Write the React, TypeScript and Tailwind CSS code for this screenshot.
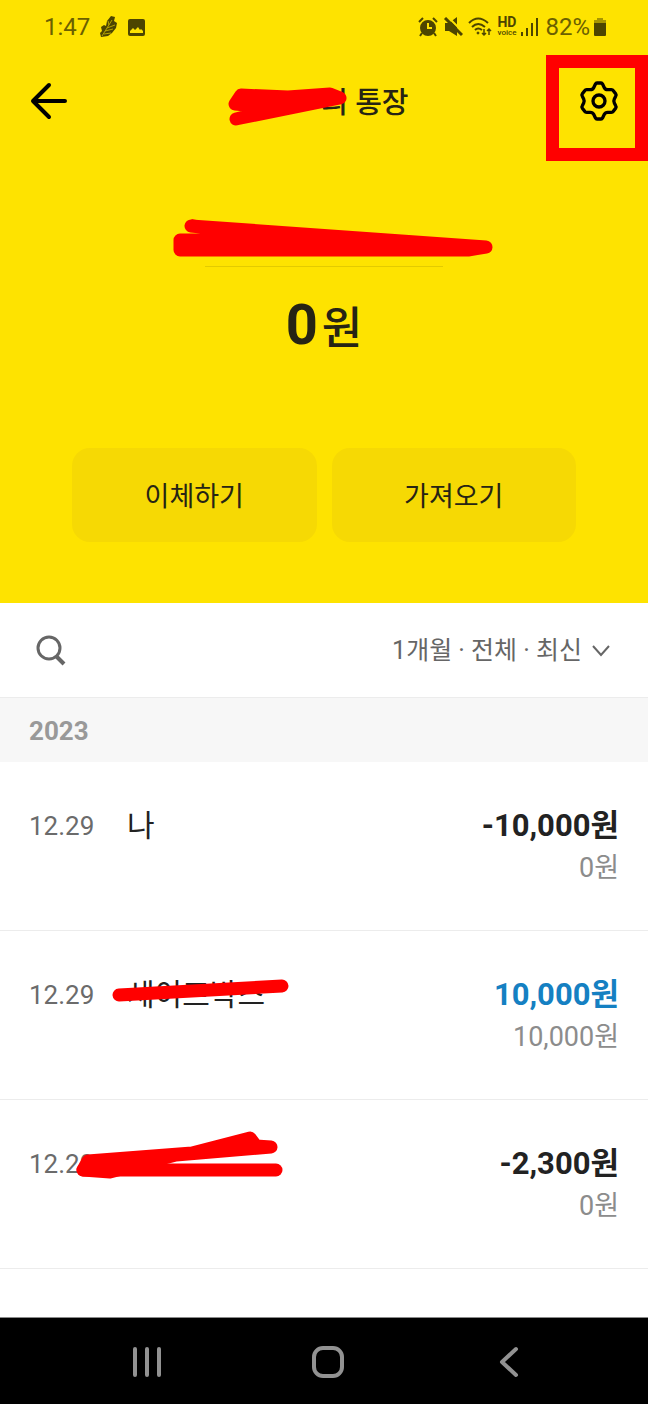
import { ReactNode } from "react";

type Transaction = {
  id: string;
  date: string;
  name: string;
  amount: string;
  balance: string;
  deposit?: boolean;
  mark?: ReactNode;
};

const transactions: Transaction[] = [
  {
    id: "tx1",
    date: "12.29",
    name: "나",
    amount: "-10,000원",
    balance: "0원",
  },
  {
    id: "tx2",
    date: "12.29",
    name: "세이프박스",
    amount: "10,000원",
    balance: "10,000원",
    deposit: true,
    mark: (
      <Marker width={300} height={100} className="left-0 top-0">
        <path d="M119 64L282 55" />
      </Marker>
    ),
  },
  {
    id: "tx3",
    date: "12.29",
    name: "",
    amount: "-2,300원",
    balance: "0원",
    mark: (
      <Marker width={300} height={100} className="left-0 top-0">
        <path d="M88 61L192 53L250 38L256 46L271 47L176 55L110 72L83 70Z" />
        <path d="M83 70H276" />
      </Marker>
    ),
  },
];

// thick red pen drawn on top of private details
function Marker({
  width,
  height,
  className,
  children,
}: {
  width: number;
  height: number;
  className: string;
  children: ReactNode;
}) {
  return (
    <svg
      width={width}
      height={height}
      viewBox={`0 0 ${width} ${height}`}
      className={`pointer-events-none absolute max-w-none fill-[#ff0000] stroke-[#ff0000] ${className}`}
      strokeWidth="13"
      strokeLinecap="round"
      strokeLinejoin="round"
      aria-hidden="true"
    >
      {children}
    </svg>
  );
}

function StatusBar() {
  return (
    <div className="flex h-[54px] items-center justify-between pl-11 pr-[42px] text-2xl text-[#6b6000]">
      <div className="flex items-center gap-[10px]">
        <span>1:47</span>
        <svg width="18" height="22" viewBox="0 0 18 22" fill="#4d4500">
          <path d="M11 0L15 1L14 5L17 7L16 12L12 17L8 20L1 21L0 17L2 15L1 11L4 9L6 10L7 5Z" />
          <path
            d="M2 20L12 4M5 15L13 13M7 12L15 9M4 18L11 17M9 9L8 5"
            stroke="#b5a300"
            strokeWidth="1"
          />
        </svg>
        <svg width="17" height="17" viewBox="0 0 17 17">
          <rect width="17" height="17" rx="2" fill="#4d4500" />
          <path d="M2 14V12L5 9L7 11L10 8L12 11L13 10L15 12V14Z" fill="#fee300" />
        </svg>
      </div>
      <div className="flex items-center gap-[5px]">
        <svg width="20" height="20" viewBox="0 0 20 20" fill="none" stroke="#4d4500">
          <circle cx="10" cy="11" r="7" fill="#4d4500" strokeWidth="2" />
          <path d="M1 5L5 1M19 5L15 1M4 16L2 19M16 16L18 19" strokeWidth="2" />
          <path d="M10 6V11H14" stroke="#fee300" strokeWidth="2" />
        </svg>
        <svg width="20" height="20" viewBox="0 0 20 20" fill="#4d4500">
          <path d="M2 6H6L14 0V19L6 14H2Z" />
          <path d="M5 0L20 15" stroke="#fee300" strokeWidth="2" />
          <path d="M2 1L19 18" stroke="#4d4500" strokeWidth="3" />
        </svg>
        <svg width="24" height="20" viewBox="0 0 24 20" fill="none" stroke="#4d4500">
          <path d="M1 6Q10 -3 20 6M4 10Q10 4 17 10M7 13Q10 10 14 13" strokeWidth="2" />
          <circle cx="10" cy="16" r="1" fill="#4d4500" />
          <path d="M16 12V18M14 16L16 18L18 16M21 18V12M19 14L21 12L23 14" strokeWidth="1.5" />
        </svg>
        <div className="flex flex-col items-center text-[#4d4500]">
          <span className="text-sm font-bold leading-3">HD</span>
          <span className="text-[8px] font-medium leading-[10px]">voice</span>
        </div>
        <svg width="17" height="18" viewBox="0 0 17 18" stroke="#4d4500" strokeWidth="2">
          <path d="M1 14V18M6 10V18" />
          <path d="M11 5V18M16 0V18" />
        </svg>
        <div className="flex items-center gap-1 pl-[2px]">
          <span>82%</span>
          <svg width="12" height="18" viewBox="0 0 12 18">
            <path d="M3 0H9V2H12V6H0V2H3Z" fill="#a89600" />
            <path d="M0 5H12V17Q12 18 11 18H1Q0 18 0 17Z" fill="#4d4500" />
          </svg>
        </div>
      </div>
    </div>
  );
}

function GearIcon() {
  return (
    <svg width="40" height="40" viewBox="0 0 120 120" fill="none" stroke="black" strokeWidth="10">
      <path d="M54 6H66Q69 6 71 10L76 20Q79 26 86 26H97Q101 26 103 29L110 38Q113 42 110 46L106 54Q103 60 106 66L110 74Q113 78 110 82L103 91Q101 94 97 94H86Q79 94 76 100L71 110Q69 114 66 114H54Q51 114 49 110L44 100Q41 94 34 94H23Q19 94 17 91L10 82Q7 78 10 74L14 66Q17 60 14 54L10 46Q7 42 10 38L17 29Q19 26 23 26H34Q41 26 44 20L49 10Q51 6 54 6Z" />
      <circle cx="60" cy="60" r="18" />
    </svg>
  );
}

function AccountHeader() {
  return (
    <header className="bg-[#fee300] text-[#262414]">
      <StatusBar />
      <div className="flex h-[94px] items-center justify-between pl-7 pr-[25px]">
        <button type="button" aria-label="뒤로" className="flex w-12">
          <svg
            width="40"
            height="40"
            viewBox="0 0 40 40"
            fill="none"
            stroke="black"
            strokeWidth="4"
            strokeLinecap="round"
            strokeLinejoin="round"
          >
            <path d="M21 4L5 20L21 36M5 20H37" />
          </svg>
        </button>
        <h1 className="relative w-[166px] pt-[6px] text-right text-[29px] font-medium">
          의 통장
          <Marker width={128} height={56} className="-left-[15px] top-0">
            <path d="M13 19L60 21L102 18L112 22L8 43L52 32L7 28Z" />
          </Marker>
        </h1>
        <button type="button" aria-label="설정" className="relative flex w-12 justify-center">
          <GearIcon />
          <span className="absolute -right-[25px] -top-[26px] h-[106px] w-[102px] border-[13px] border-[#ff0000]" />
        </button>
      </div>

      <div className="flex flex-col items-center pt-[71px]">
        <div className="relative h-12 w-[238px] border-b border-[#e3cb00]">
          <Marker width={322} height={40} className="-left-8 top-0">
            <path d="M18 7L313 28L295 31H7V21H157Z" />
          </Marker>
        </div>
        <p className="mt-[18px] text-[56px] font-bold leading-[80px]">
          0<span className="pl-1 text-[44px] font-medium">원</span>
        </p>
      </div>

      <div className="grid grid-cols-2 gap-[15px] px-[72px] pb-[61px] pt-[79px]">
        <button type="button" className="h-[94px] rounded-[18px] bg-[#f6d904] pt-1 text-[27px]">
          이체하기
        </button>
        <button type="button" className="h-[94px] rounded-[18px] bg-[#f6d904] pt-1 text-[27px]">
          가져오기
        </button>
      </div>
    </header>
  );
}

function TransactionItem({ item }: { item: Transaction }) {
  return (
    <li className="relative flex h-[169px] border-b border-[#ececec] px-[29px] pt-[43px] leading-[42px]">
      <span className="w-[98px] text-[26px] text-[#6b6b6b]">{item.date}</span>
      <span className="flex-1 text-[30px] text-[#222222]">{item.name}</span>
      <div className="text-right">
        <p
          className={
            item.deposit
              ? "text-[31px] font-bold text-[#1580c2]"
              : "text-[31px] font-bold text-[#222222]"
          }
        >
          {item.amount}
        </p>
        <p className="text-[27px] text-[#8c8c8c]">{item.balance}</p>
      </div>
      {item.mark}
    </li>
  );
}

function NavigationBar() {
  return (
    <nav className="grid h-[87px] grid-cols-3 place-items-center border-t border-[#8a8a8a] bg-black pl-14 pr-[49px] pt-[2px]">
      <button type="button" aria-label="최근 앱">
        <svg width="30" height="32" viewBox="0 0 30 32" stroke="#929292" strokeWidth="4" strokeLinecap="round">
          <path d="M3 3V29M15 3V29M27 3V29" />
        </svg>
      </button>
      <button type="button" aria-label="홈">
        <svg width="32" height="32" viewBox="0 0 32 32" fill="none" stroke="#929292" strokeWidth="4">
          <rect x="2" y="2" width="28" height="28" rx="9" />
        </svg>
      </button>
      <button type="button" aria-label="이전">
        <svg
          width="20"
          height="32"
          viewBox="0 0 20 32"
          fill="none"
          stroke="#929292"
          strokeWidth="4"
          strokeLinecap="round"
          strokeLinejoin="round"
        >
          <path d="M17 3L3 16L17 29" />
        </svg>
      </button>
    </nav>
  );
}

export default function App() {
  return (
    <div className="flex min-h-screen flex-col overflow-x-hidden bg-white font-[Roboto,'Noto_Sans_CJK_KR',sans-serif]">
      <AccountHeader />
      <main className="flex-1">
        <div className="flex h-[94px] items-center justify-between pl-9 pr-[38px] text-[#666666]">
          <button type="button" aria-label="검색">
            <svg width="30" height="32" viewBox="0 0 30 32" fill="none" stroke="#666666" strokeWidth="3">
              <circle cx="13" cy="14" r="11" />
              <path d="M20 22L28 30" strokeWidth="4" />
            </svg>
          </button>
          <button type="button" className="flex items-center gap-[10px] pt-[2px] text-[25px]">
            1개월 · 전체 · 최신
            <svg width="18" height="12" viewBox="0 0 18 12" fill="none" stroke="#666666" strokeWidth="2">
              <path d="M1 1L9 10L17 1" />
            </svg>
          </button>
        </div>
        <h2 className="flex h-[65px] items-center border-t border-[#ececec] bg-[#f7f7f7] px-[29px] pt-[2px] text-[26px] font-bold text-[#999999]">
          2023
        </h2>
        <ul>
          {transactions.map((item) => (
            <TransactionItem key={item.id} item={item} />
          ))}
        </ul>
      </main>
      <NavigationBar />
    </div>
  );
}
